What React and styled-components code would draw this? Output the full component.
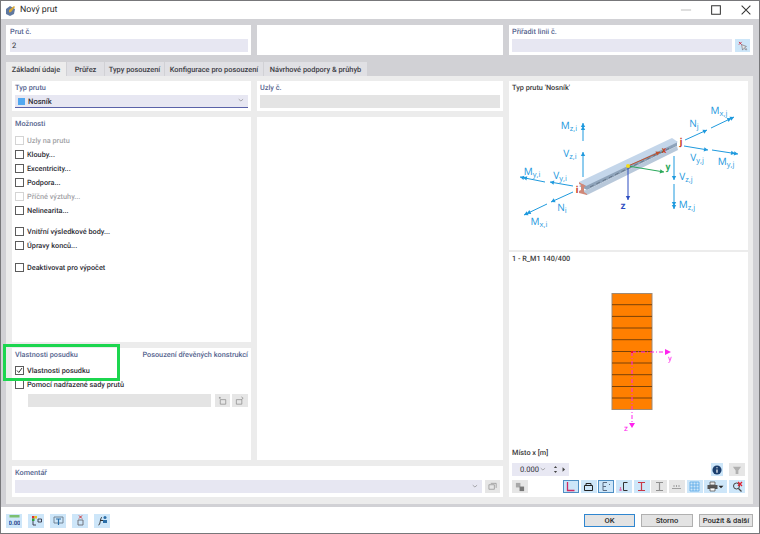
import React from "react";
import styled, { createGlobalStyle } from "styled-components";

const GlobalStyle = createGlobalStyle`
	* { box-sizing: border-box; }
	html, body { margin: 0; padding: 0; background: #77777a; }
	body { width: 760px; height: 534px; overflow: hidden; font-family: Roboto, "Noto Sans", sans-serif; text-rendering: geometricPrecision; }
`;

const Window = styled.div`
	position: relative;
	width: 758px;
	height: 532px;
	margin: 1px 0 0 1px;
	display: flex;
	flex-direction: column;
	background: #fff;
	font-size: 7.3px;
	color: #33333a;
`;

const TitleBar = styled.div`
	height: 18px;
	flex: none;
	display: flex;
	align-items: center;
	padding-left: 4px;
	gap: 4px;
	font-size: 8.8px;
	color: #2c2c2c;
`;

const TitleText = styled.span`
	flex: 1;
`;

const WinControls = styled.div`
	display: flex;
	align-items: center;
	margin-right: 5px;
	gap: 14px;
`;

const Body = styled.div`
	flex: 1;
	background: #d1d1d5;
	padding: 6px 5px 3px 5px;
	display: flex;
	flex-direction: column;
	min-height: 0;
`;

const TopRow = styled.div`
	display: grid;
	grid-template-columns: 245px 246px 244px;
	gap: 6px;
	height: 30px;
	flex: none;
`;

const Card = styled.div`
	background: #fff;
	padding: ${p => p.$padding || "1px 3px"};
	min-width: 0;
	${p => p.$area ? `grid-area: ${p.$area};` : ""}
`;

const Label = styled.div`
	font-weight: 500;
	font-size: 7.3px;
	line-height: 11px;
	height: 11px;
	color: ${p => p.$dark ? "#3a3a3a" : "#56658f"};
	white-space: nowrap;
`;

const LabelRow = styled.div`
	display: flex;
	justify-content: space-between;
`;

const FieldRow = styled.div`
	display: flex;
	gap: 3px;
	margin-top: 2px;
`;

const Field = styled.div`
	flex: 1;
	height: 13px;
	background: ${p => p.$disabled ? "#e4e4e4" : "#e7e7f2"};
	display: flex;
	align-items: center;
	padding: 0 2px;
	line-height: 13px;
	font-size: 7.6px;
`;

const SelectField = styled(Field)`
	border-bottom: 1px solid #5a62a8;
	font-weight: 500;
	gap: 3px;
	padding-left: 3px;
	margin-top: 2px;
`;

const Swatch = styled.span`
	width: 7px;
	height: 7px;
	background: #52a8f0;
	flex: none;
`;

const Grow = styled.span`
	flex: 1;
`;

const Tabs = styled.div`
	display: flex;
	margin-top: 7px;
	height: 14px;
	flex: none;
`;

const Tab = styled.div`
	width: ${p => p.$w}px;
	margin-right: 1px;
	padding-top: 1px;
	background: ${p => p.$active ? "#ececec" : "#e0e0e4"};
	font-size: 7.4px;
	font-weight: 500;
	line-height: 14px;
	text-align: center;
	white-space: nowrap;
	color: #3c3c44;
`;

const Panel = styled.div`
	flex: 1;
	width: 747px;
	background: #ececec;
	padding: 5px 5px 6px 6px;
	display: grid;
	grid-template-columns: 239px 246px 239px;
	grid-template-rows: 30px 225px 112px 31px;
	grid-template-areas:
		"type nodes right"
		"opts blank right"
		"props blank right"
		"comment comment right";
	gap: 6px;
	min-height: 0;
`;

const RightColumn = styled.div`
	grid-area: right;
	display: flex;
	flex-direction: column;
	gap: 2px;
`;

const DiagramCard = styled(Card)`
	height: 169px;
	flex: none;
`;

const SectionCard = styled(Card)`
	flex: 1;
	display: flex;
	flex-direction: column;
	padding: 1px 3px 4px;
`;

const DrawingBox = styled.svg`
	display: block;
	flex: none;
	margin-left: -3px;
`;

const CheckList = styled.div`
	display: flex;
	flex-direction: column;
	margin-top: ${p => p.$top}px;
`;

const CheckRow = styled.div`
	display: flex;
	align-items: center;
	gap: 3px;
	height: 14px;
	margin-top: ${p => p.$gap || 0}px;
	font-size: 7.3px;
	font-weight: 500;
	color: ${p => p.$off ? "#a2a2a6" : "#2e2e36"};
`;

const Box = styled.span`
	width: 9px;
	height: 9px;
	border: 1px solid ${p => p.$off ? "#d4d4d4" : "#5c5c5c"};
	flex: none;
	display: flex;
	background: #fff;
`;

const SubRow = styled.div`
	display: flex;
	margin: 3px 0 0 13px;
	gap: 2px;
	height: 13px;
`;

const SubField = styled.div`
	width: 183px;
	background: #e4e4e4;
	margin-right: 2px;
`;

const IconBtn = styled.span`
	width: ${p => p.$w || 16}px;
	height: ${p => p.$h || 13}px;
	flex: none;
	display: flex;
	align-items: center;
	justify-content: center;
	background: ${p => p.$grey ? "#e6e6e6" : "#cde6f9"};
	border: ${p => p.$on ? "1px solid #4f8fc4" : "none"};
`;

const Place = styled.div`
	display: flex;
	align-items: center;
	justify-content: space-between;
	margin-top: 5px;
`;

const Spinner = styled.div`
	width: 57px;
	height: 13px;
	background: #e8e8f3;
	display: flex;
	align-items: center;
	justify-content: flex-end;
	gap: 1px;
	padding-right: 2px;
	font-size: 7.6px;

	svg:first-of-type {
		margin-right: 3px;
	}
`;

const PairGroup = styled.div`
	display: flex;
	gap: 6px;
`;

const ViewBar = styled.div`
	display: flex;
	align-items: center;
	margin-top: 4px;
`;

const ViewGroup = styled.div`
	display: flex;
	gap: 1.7px;
	margin-left: auto;
`;

const Footer = styled.div`
	height: 26px;
	flex: none;
	background: #fff;
	display: flex;
	align-items: center;
	padding: 1px 6px 0 5px;
`;

const FooterTools = styled.div`
	display: flex;
	gap: 6px;
	flex: 1;
`;

const FooterButton = styled.button`
	width: ${p => p.$w}px;
	height: 13px;
	margin-left: 6px;
	padding: 0;
	background: #e3e3e3;
	border: 1px solid ${p => p.$primary ? "#2f86d0" : "#b0b0b0"};
	font: 500 7.6px Roboto, sans-serif;
	white-space: nowrap;
	color: #2c2c2c;
	line-height: 10px;
`;

const Highlight = styled.div`
	position: absolute;
	left: 2px;
	top: 343px;
	width: 117px;
	height: 37px;
	border: 3px solid #1cd64f;
	pointer-events: none;
`;

const Blue = "#1f9ade";

const Arrow = ({ x1, y1, x2, y2, color = Blue, w = 1, dbl, head = 4 }) => {
	const a = Math.atan2(y2 - y1, x2 - x1);
	const tri = (bx, by) => {
		const px = Math.cos(a), py = Math.sin(a);
		return `${bx},${by} ${bx - px * head - py * head * 0.55},${by - py * head + px * head * 0.55} ${bx - px * head + py * head * 0.55},${by - py * head - px * head * 0.55}`;
	};
	return (
		<g>
			<line x1={x1} y1={y1} x2={x2} y2={y2} stroke={color} strokeWidth={w} />
			<polygon points={tri(x2, y2)} fill={color} />
			{dbl && <polygon points={tri(x2 - Math.cos(a) * 3, y2 - Math.sin(a) * 3)} fill={color} />}
		</g>
	);
};

const Sym = ({ x, y, m, s, color = Blue }) => (
	<text x={x} y={y} fill={color} fontSize="10" fontFamily="Open Sans, sans-serif" textAnchor="middle">
		{m}
		<tspan fontSize="7.5" dy="2">{s}</tspan>
	</text>
);

const BeamDiagram = () => (
	<DrawingBox width="239" height="157" viewBox="509 93 239 157">
		<Arrow x1={583} y1={141} x2={583} y2={123} dbl />
		<Arrow x1={583} y1={177} x2={583} y2={152} />
		<Arrow x1={545} y1={182} x2={520} y2={177} dbl />
		<Arrow x1={573} y1={186} x2={550} y2={182} />
		<Arrow x1={573} y1={192} x2={551} y2={202} />
		<Arrow x1={547} y1={204} x2={524} y2={215} dbl />
		<Arrow x1={685} y1={140} x2={707} y2={130} />
		<Arrow x1={711} y1={128} x2={734} y2={117} dbl />
		<Arrow x1={684} y1={146} x2={708} y2={150} />
		<Arrow x1={712} y1={150} x2={738} y2={154} dbl />
		<Arrow x1={674} y1={156} x2={674} y2={180} />
		<Arrow x1={674} y1={184} x2={674} y2={209} dbl />

		<polygon points="579,186 587,190 677,146 677,141" fill="#8ea3ba" />
		<polygon points="579,191 587,195 678,150 677,146 587,190" fill="#b8c8da" />
		<polygon points="579,182 586,186 678,142 672,138" fill="#c4d6ea" />
		<line x1="590" y1="187" x2="672" y2="147" stroke="#5c6b7c" strokeWidth="0.8" strokeDasharray="4 3" />
		<polygon points="579,182 586,186 584,187 584,192 587,194 587,195 579,193 579,191 581,190 581,185 579,184" fill="#d08878" />

		<Arrow x1={628} y1={166} x2={660} y2={152} color="#c0502c" />
		<Arrow x1={628} y1={166} x2={664} y2={172} color="#29a85a" />
		<Arrow x1={628} y1={166} x2={628} y2={200} color="#2c4cc0" />
		<circle cx="628" cy="166" r="2" fill="#f3dc1e" />

		<Sym x={569} y={129} m="M" s="z,i" />
		<Sym x={570} y={157} m="V" s="z,i" />
		<Sym x={532} y={175} m="M" s="y,i" />
		<Sym x={560} y={179} m="V" s="y,i" />
		<Sym x={562} y={211} m="N" s="i" />
		<Sym x={539} y={225} m="M" s="x,i" />
		<Sym x={719} y={114} m="M" s="x,j" />
		<Sym x={694} y={127} m="N" s="j" />
		<Sym x={697} y={161} m="V" s="y,j" />
		<Sym x={726} y={165} m="M" s="y,j" />
		<Sym x={686} y={180} m="V" s="z,j" />
		<Sym x={687} y={208} m="M" s="z,j" />

		<text x="577" y="193" fill="#c8401c" fontSize="10" fontWeight="700" textAnchor="middle">i</text>
		<text x="681" y="145" fill="#c8401c" fontSize="10" fontWeight="700" textAnchor="middle">j</text>
		<text x="664" y="153" fill="#c8401c" fontSize="9" fontWeight="600" textAnchor="middle">x</text>
		<text x="668" y="170" fill="#29a85a" fontSize="10" fontWeight="600" textAnchor="middle">y</text>
		<text x="623" y="209" fill="#2c4cc0" fontSize="10" fontWeight="600" textAnchor="middle">z</text>
	</DrawingBox>
);

const plankLines = [304.7, 316.4, 328, 339.7, 351.5, 363, 374.7, 386.5, 398];

const SectionDiagram = () => (
	<DrawingBox width="239" height="183" viewBox="509 264 239 183">
		<rect x="612" y="293.5" width="40" height="116" fill="#ff7f00" stroke="#a08a74" strokeWidth="1" />
		{plankLines.map(y => <line key={y} x1="612" x2="652" y1={y} y2={y} stroke="#7a4208" strokeWidth="1" />)}
		<line x1="632" y1="352" x2="668" y2="352" stroke="#ff22ee" strokeWidth="1" strokeDasharray="4 2 1 2" />
		<line x1="632" y1="352" x2="632" y2="424" stroke="#ff22ee" strokeWidth="1" strokeDasharray="4 2 1 2" />
		<polygon points="671,352 665,349 665,355" fill="#ff22ee" />
		<polygon points="632,428 629,423 635,423" fill="#ff22ee" />
		<rect x="631" y="351" width="2" height="2" fill="#f01020" />
		<text x="670" y="361" fill="#ff22ee" fontSize="8" textAnchor="middle">y</text>
		<text x="626" y="431" fill="#ff22ee" fontSize="8" textAnchor="middle">z</text>
	</DrawingBox>
);

const Glyph = ({ children, size = 11 }) => (
	<svg width={size} height={size} viewBox="0 0 11 11" fill="none">{children}</svg>
);

const viewIcons = [
	{ on: true, d: <path d="M2.500 1v8.500h7" stroke="#d02860" strokeWidth="1.300" /> },
	{ d: <path d="M1.500 4.500h8v5h-8zM3 4.500v-2h5v2" stroke="#222" strokeWidth="1" /> },
	{ on: true, d: <path d="M2 1.500h4M2 1.500v8h4M2 5.500h3M8 3l1 1" stroke="#5a6a80" strokeWidth="1" /> },
	{ d: <g><path d="M5.500 1.500h4M5.500 1.500v8h4" stroke="#333" strokeWidth="1" /><path d="M1 9h3M2.500 6v4" stroke="#e070b0" strokeWidth="1.200" /></g> },
	{ d: <path d="M2 1.500h7M5.500 1.500v8M2 9.500h7" stroke="#c83848" strokeWidth="1.200" /> },
	{ grey: true, d: <path d="M2 1.500h7M5.500 1.500v8M2 9.500h7" stroke="#909090" strokeWidth="1.200" /> },
	{ grey: true, d: <path d="M1 7.500h9M3 4v2M5.500 4v2M8 4v2" stroke="#a0a0a0" strokeWidth="1" /> },
	{ d: <path d="M1 1h9v9H1zM4 1v9M7 1v9M1 4h9M1 7h9" stroke="#58a8e8" strokeWidth="0.800" /> },
];

const toolIcons = [
	<g key="a"><rect x="0.500" y="0" width="10" height="2.500" fill="#7cc070" /><text x="5.500" y="9.500" fontSize="6" fontWeight="700" fill="#2a4a90" textAnchor="middle">0.00</text></g>,
	<g key="b"><rect x="1" y="1" width="2.500" height="2.500" fill="#e03030" /><rect x="3.500" y="1" width="2.500" height="2.500" fill="#e8c020" /><rect x="1" y="3.500" width="2.500" height="2.500" fill="#30a040" /><path d="M2 6v4h3M7 4h3.500v3H7z" stroke="#334" strokeWidth="0.900" /></g>,
	<g key="c"><path d="M1 2h9v6H1z" stroke="#6a7a8a" strokeWidth="0.900" /><path d="M3 4h5M5.500 4v6" stroke="#2a6ea8" strokeWidth="1.200" /></g>,
	<g key="d"><path d="M3 5h5v5H3z" stroke="#6a6a70" strokeWidth="0.900" /><path d="M4 0.500l3 3M7 0.500l-3 3" stroke="#d03030" strokeWidth="1" /></g>,
	<g key="e"><path d="M1.500 10c2 0 1.500-7 3.500-8M3 5.500h3" stroke="#333" strokeWidth="1" /><path d="M6 5h4v3H6z" fill="#2a6ea8" /><circle cx="8" cy="2.500" r="1.500" fill="#2a6ea8" /></g>,
];

const Check = ({ label, off, checked, gap }) => (
	<CheckRow $off={off} $gap={gap}>
		<Box $off={off}>
			{checked && (
				<svg width="7" height="7" viewBox="0 0 7 7" fill="none">
					<path d="M1 3.500l1.800 2L6 1" stroke="#3a3a3a" strokeWidth="1" />
				</svg>
			)}
		</Box>
		{label}
	</CheckRow>
);

export default function App() {
	return (
		<>
			<GlobalStyle />
			<Window>
				<TitleBar>
					<Glyph size={11}>
						<path d="M1 4l4-3 5 3-1 5-4 2-4-2z" fill="#5f78a0" />
						<path d="M4 5l5-4 1 1-4 5-2 .5z" fill="#d8a838" />
					</Glyph>
					<TitleText>Nový prut</TitleText>
					<WinControls>
						<Glyph size={16}><path d="M2 5.500h7" stroke="#c6c6c6" strokeWidth="0.800" /></Glyph>
						<Glyph size={16}><path d="M2.500 2.500h6v6h-6z" stroke="#333" strokeWidth="0.700" /></Glyph>
						<Glyph size={16}><path d="M2.500 2.500l6 6M8.500 2.500l-6 6" stroke="#333" strokeWidth="0.700" /></Glyph>
					</WinControls>
				</TitleBar>
				<Body>
					<TopRow>
						<Card $padding="1px 3px 1px 4px">
							<Label>Prut č.</Label>
							<FieldRow><Field>2</Field></FieldRow>
						</Card>
						<Card />
						<Card>
							<Label>Přiřadit linii č.</Label>
							<FieldRow>
								<Field />
								<IconBtn $w={15}>
									<Glyph size={10}>
										<path d="M4 4l1 6 1.500-2 2.500 2 .8-1-2.500-2 2-1z" fill="#e8e8e8" stroke="#707078" strokeWidth="0.700" />
										<path d="M1 1l3 3M4 1L1 4" stroke="#d03040" strokeWidth="1" />
									</Glyph>
								</IconBtn>
							</FieldRow>
						</Card>
					</TopRow>
					<Tabs>
						<Tab $active $w={60}>Základní údaje</Tab>
						<Tab $w={37}>Průřez</Tab>
						<Tab $w={59}>Typy posouzení</Tab>
						<Tab $w={98}>Konfigurace pro posouzení</Tab>
						<Tab $w={103}>Návrhové podpory &amp; průhyb</Tab>
					</Tabs>
					<Panel>
						<Card $area="type">
							<Label>Typ prutu</Label>
							<SelectField>
								<Swatch />
								<Grow>Nosník</Grow>
								<Glyph size={8}><path d="M1 3l3 2.500L7 3" stroke="#777" strokeWidth="0.800" /></Glyph>
							</SelectField>
						</Card>
						<Card $area="nodes">
							<Label>Uzly č.</Label>
							<FieldRow><Field $disabled /></FieldRow>
						</Card>
						<Card $area="opts">
							<Label>Možnosti</Label>
							<CheckList $top={4}>
								<Check off label="Uzly na prutu" />
								<Check label="Klouby..." />
								<Check label="Excentricity..." />
								<Check label="Podpora..." />
								<Check off label="Příčné výztuhy..." />
								<Check label="Nelinearita..." />
								<Check gap={7} label="Vnitřní výsledkové body..." />
								<Check label="Úpravy konců..." />
								<Check gap={8} label="Deaktivovat pro výpočet" />
							</CheckList>
						</Card>
						<Card $area="blank" />
						<Card $area="props">
							<LabelRow>
								<Label>Vlastnosti posudku</Label>
								<Label>Posouzení dřevěných konstrukcí</Label>
							</LabelRow>
							<CheckList $top={3}>
								<Check checked label="Vlastnosti posudku" />
								<Check label="Pomocí nadřazené sady prutů" />
							</CheckList>
							<SubRow>
								<SubField />
								<IconBtn $grey $w={15}>
									<Glyph size={10}><path d="M2.500 4h6v5h-6zM1 2h2M2 1v2" stroke="#8a8a8a" strokeWidth="0.800" /></Glyph>
								</IconBtn>
								<IconBtn $grey $w={16}>
									<Glyph size={10}><path d="M1.500 4h6v5h-6zM7 1l2 1.500L7 4" stroke="#8a8a8a" strokeWidth="0.800" /></Glyph>
								</IconBtn>
							</SubRow>
						</Card>
						<Card $area="comment">
							<Label>Komentář</Label>
							<FieldRow>
								<Field>
									<Grow />
									<Glyph size={8}><path d="M1 3l3 2.500L7 3" stroke="#777" strokeWidth="0.800" /></Glyph>
								</Field>
								<IconBtn $grey $w={15}>
									<Glyph size={10}><path d="M1 3h6v5H1zM3 1.500h6v5" stroke="#909090" strokeWidth="0.800" /></Glyph>
								</IconBtn>
							</FieldRow>
						</Card>
						<RightColumn>
							<DiagramCard>
								<Label $dark>Typ prutu 'Nosník'</Label>
								<BeamDiagram />
							</DiagramCard>
							<SectionCard>
								<Label $dark>1 - R_M1 140/400</Label>
								<SectionDiagram />
								<Label $dark>Místo x [m]</Label>
								<Place>
									<Spinner>
										0.000
										<Glyph size={8}><path d="M1 3l3 2.500L7 3" stroke="#777" strokeWidth="0.800" /></Glyph>
										<Glyph size={7}><path d="M5.500 0L3 3h5zM5.500 11L3 8h5z" fill="#444" /></Glyph>
										<Glyph size={7}><path d="M4 2l4 3.500L4 9z" fill="#444" /></Glyph>
									</Spinner>
									<PairGroup>
										<IconBtn $w={12}>
											<Glyph size={10}><circle cx="5.500" cy="5.500" r="5" fill="#1c3f6e" /><path d="M5.500 2.500v1M5.500 5v3.500" stroke="#fff" strokeWidth="1.300" /></Glyph>
										</IconBtn>
										<IconBtn $grey>
											<Glyph size={10}><path d="M1 2h9L7 6v4H4V6z" fill="#b0b0b0" /></Glyph>
										</IconBtn>
									</PairGroup>
								</Place>
								<ViewBar>
									<IconBtn $grey>
										<Glyph size={10}><path d="M1 1h5v5H1z" fill="#a8a8a8" /><path d="M5 5h5v5H5z" fill="#787878" /></Glyph>
									</IconBtn>
									<ViewGroup>
										{viewIcons.map((icon, i) => (
											<IconBtn key={i} $on={icon.on} $grey={icon.grey}>
												<Glyph>{icon.d}</Glyph>
											</IconBtn>
										))}
										<IconBtn $w={23}>
											<Glyph>
												<path d="M3 1h5v3H3z" fill="#eee" stroke="#444" strokeWidth="0.700" />
												<path d="M0.500 4h10v4h-10z" fill="#555" />
												<path d="M3 7h5v3H3z" fill="#fff" stroke="#444" strokeWidth="0.700" />
											</Glyph>
											<Glyph size={6}><path d="M1 3h9l-4.500 5z" fill="#222" /></Glyph>
										</IconBtn>
										<IconBtn>
											<Glyph>
												<circle cx="4.500" cy="5" r="3" stroke="#444" strokeWidth="1" />
												<path d="M6.500 7.500l3 3" stroke="#444" strokeWidth="1.300" />
												<path d="M6 1l4 4M10 1L6 5" stroke="#e02030" strokeWidth="1.300" />
											</Glyph>
										</IconBtn>
									</ViewGroup>
								</ViewBar>
							</SectionCard>
						</RightColumn>
					</Panel>
				</Body>
				<Footer>
					<FooterTools>
						{toolIcons.map(icon => (
							<IconBtn key={icon.key} $h={14}><Glyph>{icon}</Glyph></IconBtn>
						))}
					</FooterTools>
					<FooterButton $primary $w={51}>OK</FooterButton>
					<FooterButton $w={52}>Storno</FooterButton>
					<FooterButton $w={54}>Použít &amp; další</FooterButton>
				</Footer>
				<Highlight />
			</Window>
		</>
	);
}
